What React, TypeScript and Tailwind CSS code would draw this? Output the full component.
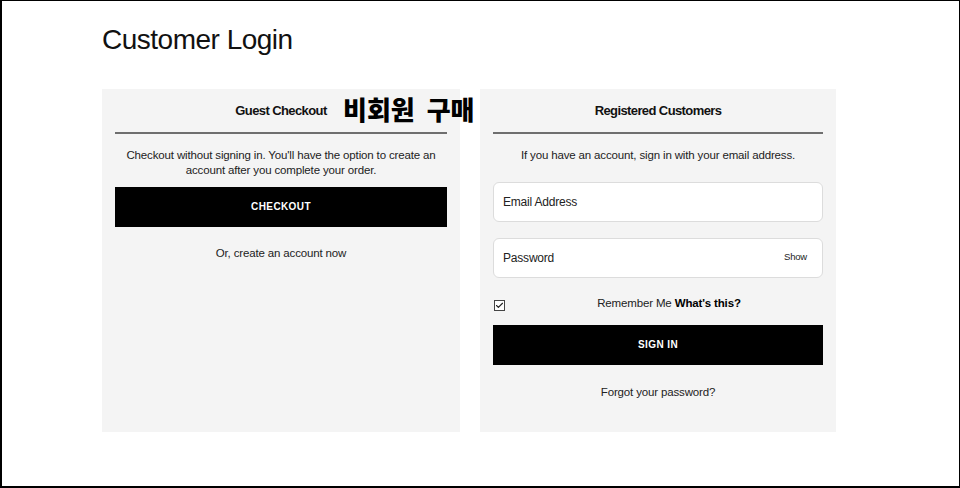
import { Check } from 'lucide-react'
import { FC } from 'react'

const font = { fontFamily: '"Liberation Sans", Arial, sans-serif' }

const PanelHeading: FC<{ title: string }> = ({ title }) => (
  <div className="pt-[13px]">
    <h2 className="text-center text-[13px] leading-[18px] font-bold tracking-[-0.6px] text-[#111]">{title}</h2>
    <div className="mt-[12px] h-[1.5px] bg-[#6e6e6e]" />
  </div>
)

const BlackButton: FC<{ label: string }> = ({ label }) => (
  <button className="flex h-10 w-full items-center justify-center bg-black text-[10px] font-bold tracking-[0.4px] text-white">
    {label}
  </button>
)

const App: FC = () => {
  return (
    <div
      className="h-[488px] w-[960px] overflow-hidden border-t border-r border-b-2 border-l-2 border-black bg-white text-[#222]"
      style={font}
    >
      <div className="ml-[100px] w-[734px]">
        <h1 className="pt-[21px] text-[28px] leading-[36px] font-normal tracking-[-0.5px] text-[#111]">Customer Login</h1>

        <div className="mt-[31px] grid grid-cols-[358px_356px] gap-5">
          {/* Guest Checkout */}
          <section className="relative h-[343px] bg-[#f4f4f4] px-[13px]">
            <PanelHeading title="Guest Checkout" />
            <span
              className="absolute top-[7px] left-[241px] text-[26px] leading-none font-black whitespace-nowrap text-black"
              style={{ fontFamily: '"Noto Sans CJK KR", sans-serif' }}
            >
              비회원&nbsp; 구매
            </span>
            <p className="mt-[14px] text-center text-[11.5px] leading-[15px] tracking-[-0.15px] text-[#222]">
              Checkout without signing in. You'll have the option to create an
              <br />
              account after you complete your order.
            </p>
            <div className="mt-[9px]">
              <BlackButton label="CHECKOUT" />
            </div>
            <p className="mt-[19px] text-center text-[11.5px] leading-[15px] tracking-[-0.15px]">Or, create an account now</p>
          </section>

          {/* Registered Customers */}
          <section className="h-[343px] bg-[#f4f4f4] px-[13px]">
            <PanelHeading title="Registered Customers" />
            <p className="mt-[14px] text-center text-[11.5px] leading-[15px] tracking-[-0.15px]">
              If you have an account, sign in with your email address.
            </p>
            <div className="mt-[19px] flex h-10 items-center rounded-[6px] border border-[#dcdcdc] bg-white px-[9px] text-[12px] tracking-[-0.2px]">
              Email Address
            </div>
            <div className="mt-[16px] flex h-10 items-center justify-between rounded-[6px] border border-[#dcdcdc] bg-white pr-[15px] pl-[9px] text-[12px] tracking-[-0.2px]">
              <span>Password</span>
              <span className="text-[9.5px]">Show</span>
            </div>
            <div className="mt-[18px] flex h-[16px] items-center">
              <span className="mt-[3px] ml-px flex h-[11px] w-[11px] items-center justify-center border border-[#444] bg-white">
                <Check className="h-[9px] w-[9px]" strokeWidth={3} />
              </span>
              <p className="flex-1 pl-[10px] text-center text-[11.5px] leading-[15px] tracking-[-0.15px]">
                Remember Me <b className="font-bold text-black">What's this?</b>
              </p>
            </div>
            <div className="mt-[13px]">
              <BlackButton label="SIGN IN" />
            </div>
            <p className="mt-[20px] text-center text-[11.5px] leading-[15px] tracking-[-0.15px]">Forgot your password?</p>
          </section>
        </div>
      </div>
    </div>
  )
}

export default App
